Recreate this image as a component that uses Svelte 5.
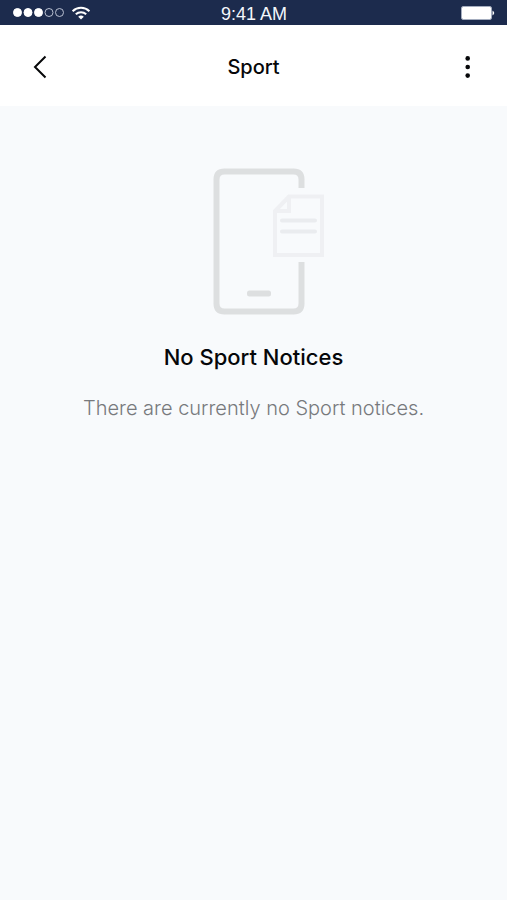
<script lang="ts">
  let { category = 'Sport', time = '9:41 AM' }: { category?: string; time?: string } = $props();

  const signalStrength = 3;
  const signalDots = [0, 1, 2, 3, 4];
</script>

<svelte:head><title>{category} Notices</title></svelte:head>

<div class="status-bar">
  <div class="status-left">
    <svg class="signal" width="51" height="9" viewBox="0 0 51 9" aria-hidden="true">
      {#each signalDots as dot (dot)}
        <circle class:filled={dot < signalStrength} cx={4.5 + dot * 10.5} cy="4.5" r="4" />
      {/each}
    </svg>
    <svg class="wifi" viewBox="0 0 20 14" aria-hidden="true">
      <path d="M1.6 5.2a12.2 12.2 0 0 1 16.8 0" />
      <path d="M4.8 8.3a7.6 7.6 0 0 1 10.4 0" />
      <path class="wifi-base" d="M7.2 10.8a4.2 4.2 0 0 1 5.6 0L10 13.6z" />
    </svg>
  </div>
  <span class="time">{time}</span>
  <div class="status-right">
    <svg class="battery" viewBox="0 0 34 14" aria-hidden="true">
      <rect class="battery-case" x="0.5" y="0.5" width="30" height="13" rx="1.5" />
      <rect x="1" y="1" width="29" height="12" rx="1" />
      <path d="M31.5 4.5q3.5 2.5 0 5z" />
    </svg>
  </div>
</div>

<header class="nav">
  <button class="icon-btn" type="button" aria-label="Back">
    <svg width="24" height="24" viewBox="0 0 24 24" aria-hidden="true">
      <path class="chevron" d="M17.5 1.5 7 12 17.5 22.5" />
    </svg>
  </button>
  <h1>{category}</h1>
  <button class="icon-btn" type="button" aria-label="More options">
    <svg width="24" height="24" viewBox="0 0 24 24" aria-hidden="true">
      <circle cx="12.7" cy="3.4" r="2.3" />
      <circle cx="12.7" cy="12" r="2.3" />
      <circle cx="12.7" cy="20.6" r="2.3" />
    </svg>
  </button>
</header>

<main class="empty-state">
  <svg class="illustration" width="114" height="148" viewBox="0 0 114 148" aria-hidden="true">
    <!-- phone -->
    <path class="phone" d="M88.5 20V11.5q0-8-8-8H11.5q-8 0-8 8v124q0 8 8 8h69q8 0 8-8V94" />
    <rect class="home" x="34" y="122.500" width="24" height="6" rx="2.5" />
    <!-- notice -->
    <path class="sheet" d="M76 28.500h33v58.500H62V43z" />
    <path class="sheet" d="M76 28.500v14.500H62" />
    <path class="lines" d="M69 52.500h33M69 63.500h33" />
  </svg>
  <h2>No {category} Notices</h2>
  <p>There are currently no {category} notices.</p>
</main>

<style>
  :global(body) {
    background: #f8fafc;
    font-family: Inter, 'Liberation Sans', sans-serif;
    color: #060709;
  }
  h1, h2, p { margin: 0; }

  /* Status bar */
  .status-bar {
    display: grid; grid-template-columns: 1fr auto 1fr; align-items: center;
    height: 25px; padding: 0 12px 0 13px;
    background: #1c2b4d; color: #f3f6fb;
  }
  .status-left { display: flex; align-items: center; gap: 7px; }
  .signal circle { fill: none; stroke: #b9c1d1; }
  .signal .filled { fill: #fff; stroke: #fff; }
  .wifi { width: 20px; height: 14px; fill: none; stroke: #fff; stroke-width: 2; }
  .wifi .wifi-base { fill: #fff; stroke: none; }
  .time {
    padding-top: 2px;
    font: 18px/22px 'Liberation Sans', Arial, sans-serif;
  }
  .status-right { display: flex; justify-content: flex-end; }
  .battery { width: 34px; height: 14px; fill: #fff; }
  .battery .battery-case { fill: none; stroke: #a4adbf; }

  /* Nav */
  .nav {
    display: flex; align-items: center; justify-content: space-between;
    box-sizing: border-box; height: 81px; padding: 2px 16px 0; background: #fff;
  }
  .nav h1 { font-size: 20px; line-height: 28px; font-weight: 500; }
  .icon-btn {
    display: flex; align-items: center; justify-content: center;
    width: 48px; height: 48px; padding: 0;
    background: none; border: none; color: inherit; cursor: pointer;
  }
  .icon-btn svg { fill: currentColor; }
  .icon-btn .chevron { fill: none; stroke: currentColor; stroke-width: 2; }

  /* Empty state */
  .empty-state {
    display: flex; flex-direction: column; align-items: center;
    padding: 62px 24px; text-align: center;
  }
  .illustration { margin-left: 32px; fill: none; }
  .phone { stroke: #dddfe0; stroke-width: 6; }
  .home { fill: #dddfe0; }
  .sheet { stroke: #eff0f3; stroke-width: 4; }
  .lines { stroke: #eaecef; stroke-width: 4; stroke-linecap: round; }
  h2 { margin-top: 25px; font-size: 22px; line-height: 32px; font-weight: 500; }
  p { margin-top: 20px; font-size: 20px; line-height: 30px; font-weight: 300; color: #77797c; }
</style>
